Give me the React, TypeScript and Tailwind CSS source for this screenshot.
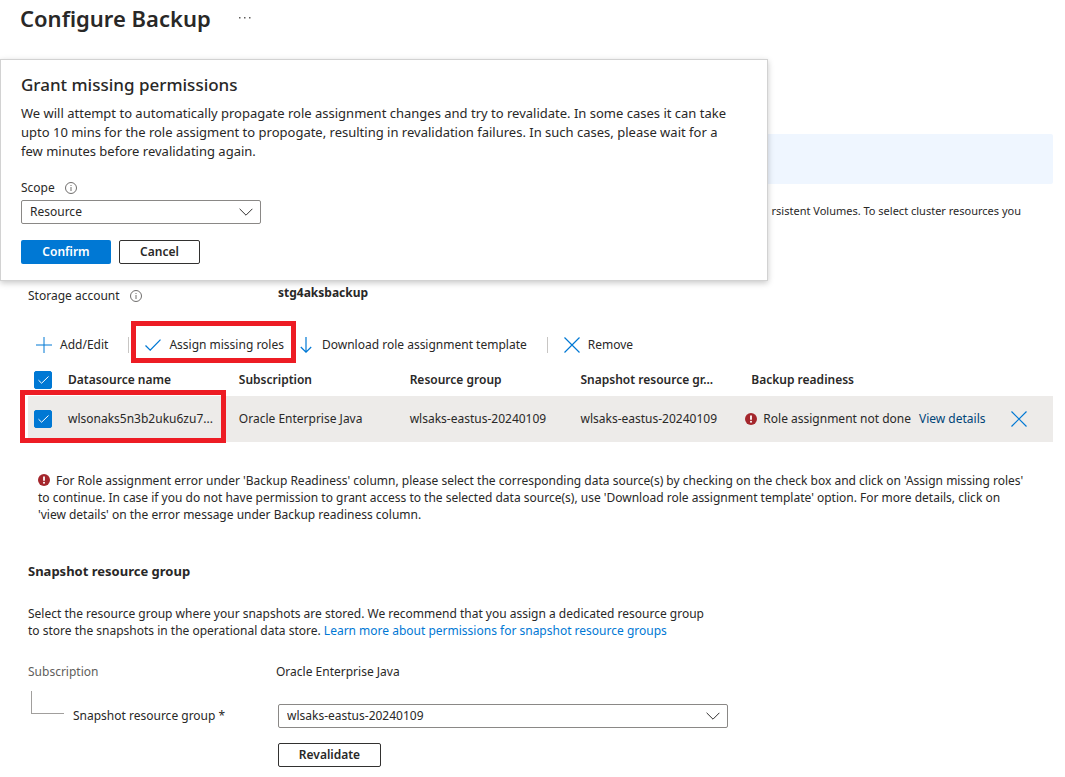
import { useState } from "react";

function InfoIcon() {
  return (
    <svg width="12" height="12" viewBox="0 0 12 12" fill="none" stroke="#605e5c" aria-hidden="true">
      <circle cx="6" cy="6" r="5.5" strokeWidth="0.9" />
      <path d="M6 5v4M6 3v1" strokeWidth="0.9" />
    </svg>
  );
}

function ErrorIcon() {
  return (
    <svg className="inline-block shrink-0" width="12" height="12" viewBox="0 0 12 12" aria-hidden="true">
      <circle cx="6" cy="6" r="6" fill="#a4262c" />
      <path d="M5.1 2.4h1.8v4.4H5.1z" fill="#fff" />
      <circle cx="6" cy="8.7" r="1" fill="#fff" />
    </svg>
  );
}

function CloseIcon() {
  return (
    <svg className="shrink-0" width="16" height="16" viewBox="0 0 16 16" fill="none" stroke="#0078d4" strokeWidth="1.2" aria-hidden="true">
      <path d="M.5.5l15 15M15.5.5l-15 15" />
    </svg>
  );
}

function Chevron() {
  return (
    <svg
      className="pointer-events-none absolute top-2 right-2"
      width="14"
      height="8"
      viewBox="0 0 14 8"
      fill="none"
      stroke="#323130"
      aria-hidden="true"
    >
      <path d="M.6.8L7 7.2 13.4.8" />
    </svg>
  );
}

function Dropdown({ id, value }: { id: string; value: string }) {
  return (
    <div className="relative">
      <select
        id={id}
        defaultValue={value}
        className="block h-6 w-full appearance-none rounded-xs border border-[#8a8886] bg-white pr-7 pl-2 text-xs"
      >
        <option>{value}</option>
      </select>
      <Chevron />
    </div>
  );
}

function Checkbox({ label }: { label: string }) {
  const [checked, setChecked] = useState(true);
  return (
    <span className="relative ml-1.5 block h-[18px] w-[18px]">
      <input
        type="checkbox"
        aria-label={label}
        checked={checked}
        onChange={(e) => setChecked(e.target.checked)}
        className="block h-[18px] w-[18px] appearance-none rounded-xs border border-[#323130] bg-white checked:border-[#0078d4] checked:bg-[#0078d4]"
      />
      <svg className="pointer-events-none absolute top-[5px] left-1" width="11" height="8" viewBox="0 0 11 8" fill="none" stroke="#fff" aria-hidden="true">
        <path d="M.5 4.2l3.1 3L10.5.5" />
      </svg>
    </span>
  );
}

const columns = ["Datasource name", "Subscription", "Resource group", "Snapshot resource gr..."];
const row = ["wlsonaks5n3b2uku6zu7...", "Oracle Enterprise Java", "wlsaks-eastus-20240109", "wlsaks-eastus-20240109"];

function PermissionsDialog() {
  return (
    <div
      role="dialog"
      aria-labelledby="dialog-title"
      className="absolute top-[59px] left-0 z-10 w-[768px] max-w-full border border-[#d2d2d2] bg-white px-5 pt-[13px] pb-4 shadow-[0_2px_6px_rgba(0,0,0,0.22)]"
    >
      <h2 id="dialog-title" className="text-[17px] leading-6 font-medium">
        Grant missing permissions
      </h2>
      <p className="mt-[7px] text-[13px] leading-[19px]">
        We will attempt to automatically propagate role assignment changes and try to revalidate. In some cases it can take
        <br />
        upto 10 mins for the role assigment to propogate, resulting in revalidation failures. In such cases, please wait for a
        <br />
        few minutes before revalidating again.
      </p>
      <div className="mt-[18px] flex items-center gap-2.5 leading-[18px]">
        <label htmlFor="scope">Scope</label>
        <InfoIcon />
      </div>
      <div className="mt-[3px] w-60">
        <Dropdown id="scope" value="Resource" />
      </div>
      <div className="mt-4 flex gap-2 font-semibold">
        <button className="h-6 w-[90px] rounded-xs bg-[#0078d4] text-white">Confirm</button>
        <button className="h-6 w-[81px] rounded-xs border border-[#323130] bg-white">Cancel</button>
      </div>
    </div>
  );
}

function Toolbar() {
  return (
    <div className="mt-[22px] flex h-9 items-center pl-2">
      <button className="flex items-center gap-2">
        <svg width="16" height="16" viewBox="0 0 16 16" fill="none" stroke="#0078d4" aria-hidden="true">
          <path d="M8 0v16M0 8h16" />
        </svg>
        Add/Edit
      </button>
      <span className="ml-5 h-4 w-px bg-[#c8c6c4]" />
      <button className="relative ml-4 flex items-center gap-2">
        <svg width="16" height="12" viewBox="0 0 16 12" fill="none" stroke="#0078d4" strokeWidth="1.3" aria-hidden="true">
          <path d="M.5 6.5l4.7 4.6L15.5.6" />
        </svg>
        Assign missing roles
        <span className="pointer-events-none absolute -top-4 -right-3 -bottom-2.5 -left-3.5 border-5 border-[#ed1c24]" />
      </button>
      <button className="ml-4 flex items-center gap-2.5">
        <svg width="12" height="16" viewBox="0 0 12 16" fill="none" stroke="#0078d4" strokeWidth="1.2" aria-hidden="true">
          <path d="M6 0v15M.8 10L6 15.2 11.2 10" />
        </svg>
        Download role assignment template
      </button>
      <span className="ml-5 h-4 w-px bg-[#c8c6c4]" />
      <button className="ml-4 flex items-center gap-2">
        <CloseIcon />
        Remove
      </button>
    </div>
  );
}

function DatasourceTable() {
  return (
    <div className="relative">
      <table className="w-full table-fixed text-left">
        <thead>
          <tr className="h-[33px]">
            <th className="w-10">
              <Checkbox label="Select all" />
            </th>
            {columns.map((name) => (
              <th key={name} className="w-1/6 font-semibold whitespace-nowrap">
                {name}
              </th>
            ))}
            <th className="font-semibold">Backup readiness</th>
          </tr>
        </thead>
        <tbody>
          <tr className="h-[46px] bg-[#edebe9]">
            <td>
              <Checkbox label="Select datasource" />
            </td>
            {row.map((text, i) => (
              <td key={i} className="whitespace-nowrap">
                {text}
              </td>
            ))}
            <td>
              <div className="-ml-1.5 flex items-center whitespace-nowrap">
                <ErrorIcon />
                <span className="ml-1.5">Role assignment not done</span>
                <a href="#" className="ml-2 text-[#004578]">
                  View details
                </a>
                <button aria-label="Remove datasource" className="mr-[26px] ml-auto">
                  <CloseIcon />
                </button>
              </div>
            </td>
          </tr>
        </tbody>
      </table>
      <span className="pointer-events-none absolute -bottom-px -left-2 h-[53px] w-[206px] border-5 border-[#ed1c24]" />
    </div>
  );
}

export default function App() {
  return (
    <div className="relative bg-white font-['Noto_Sans',sans-serif] text-xs text-[#292827]">
      <header className="flex h-9 items-center gap-7 pl-5">
        <h1 className="text-[22px] leading-8 font-semibold">Configure Backup</h1>
        <button aria-label="More">
          <svg width="12" height="2" viewBox="0 0 12 2" fill="#605e5c" aria-hidden="true">
            <path d="M0 0h1.5v1.5H0zM5 0h1.5v1.5H5zM10 0h1.5v1.5H10z" />
          </svg>
        </button>
      </header>

      <PermissionsDialog />

      <main className="pt-[98px] pr-3 pb-[10px] pl-7">
        <div className="h-[50px] rounded-xs bg-[#eff6ff]" />
        <p className="mt-[18px] pr-8 text-right text-[11px] leading-[18px]">rsistent Volumes. To select cluster resources you</p>

        <div className="mt-16 flex leading-[18px]">
          <div className="flex w-[250px] items-center gap-2.5 pt-[3px]">
            Storage account
            <InfoIcon />
          </div>
          <span className="font-bold">stg4aksbackup</span>
        </div>

        <Toolbar />
        <DatasourceTable />

        <p className="mt-[30px] pl-2.5 leading-[17px]">
          <span className="mr-1.5 inline-block align-[2px] leading-3">
            <ErrorIcon />
          </span>
          For Role assignment error under 'Backup Readiness' column, please select the corresponding data source(s) by checking on the check box and click on 'Assign missing roles'
          <br />
          to continue. In case if you do not have permission to grant access to the selected data source(s), use 'Download role assignment template' option. For more details, click on
          <br />
          'view details' on the error message under Backup readiness column.
        </p>

        <h2 className="mt-[39px] text-[13px] leading-[18px] font-bold">Snapshot resource group</h2>
        <p className="mt-[25px] leading-[17px]">
          Select the resource group where your snapshots are stored. We recommend that you assign a dedicated resource group
          <br />
          to store the snapshots in the operational data store.{" "}
          <a href="#" className="text-[#0078d4]">
            Learn more about permissions for snapshot resource groups
          </a>
        </p>

        <div className="mt-6 flex leading-[18px]">
          <span className="w-[248px] text-[#605e5c]">Subscription</span>
          <span>Oracle Enterprise Java</span>
        </div>
        <div className="mt-[10px] flex items-start">
          <div className="flex w-[250px] items-start pl-[3px]">
            <span className="h-[23px] w-[33px] border-b border-l border-[#a19f9d]" />
            <label htmlFor="snapshot-group" className="mt-4 ml-[9px] leading-[18px]">
              Snapshot resource group *
            </label>
          </div>
          <div className="mt-[13px] w-[450px]">
            <Dropdown id="snapshot-group" value="wlsaks-eastus-20240109" />
            <button className="mt-[15px] h-6 w-[103px] rounded-xs border border-[#323130] bg-white font-semibold">Revalidate</button>
          </div>
        </div>
      </main>
    </div>
  );
}
